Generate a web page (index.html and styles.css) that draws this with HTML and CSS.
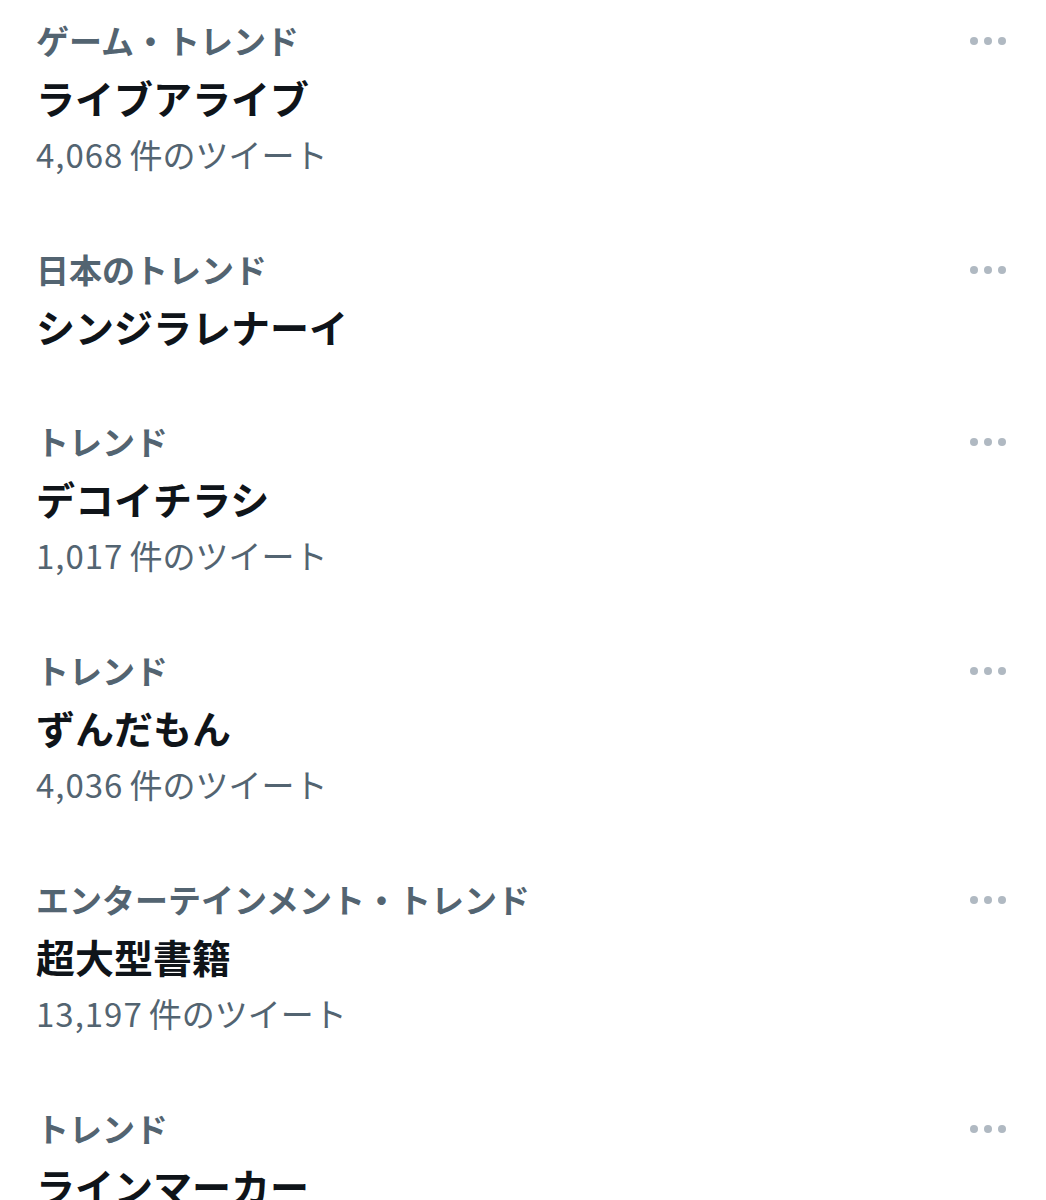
FILE: index.html
```html
<!DOCTYPE html>
<html lang="ja">
<head>
    <meta charset="UTF-8">
    <meta name="viewport" content="width=device-width, initial-scale=1.0">
    <title>トレンド</title>
    <link rel="stylesheet" href="styles.css">
</head>
<body>

    <div class="trend-list">

        <div class="trend">
            <div class="trend-body">
                <div class="trend-category">ゲーム・トレンド</div>
                <div class="trend-name">ライブアライブ</div>
                <div class="trend-count"><span class="num">4,068</span>件のツイート</div>
            </div>
            <div class="more"><span></span><span></span><span></span></div>
        </div>

        <div class="trend">
            <div class="trend-body">
                <div class="trend-category">日本のトレンド</div>
                <div class="trend-name">シンジラレナーイ</div>
            </div>
            <div class="more"><span></span><span></span><span></span></div>
        </div>

        <div class="trend">
            <div class="trend-body">
                <div class="trend-category">トレンド</div>
                <div class="trend-name">デコイチラシ</div>
                <div class="trend-count"><span class="num">1,017</span>件のツイート</div>
            </div>
            <div class="more"><span></span><span></span><span></span></div>
        </div>

        <div class="trend">
            <div class="trend-body">
                <div class="trend-category">トレンド</div>
                <div class="trend-name">ずんだもん</div>
                <div class="trend-count"><span class="num">4,036</span>件のツイート</div>
            </div>
            <div class="more"><span></span><span></span><span></span></div>
        </div>

        <div class="trend">
            <div class="trend-body">
                <div class="trend-category">エンターテインメント・トレンド</div>
                <div class="trend-name">超大型書籍</div>
                <div class="trend-count"><span class="num">13,197</span>件のツイート</div>
            </div>
            <div class="more"><span></span><span></span><span></span></div>
        </div>

        <div class="trend">
            <div class="trend-body">
                <div class="trend-category">トレンド</div>
                <div class="trend-name">ラインマーカー</div>
            </div>
            <div class="more"><span></span><span></span><span></span></div>
        </div>

    </div>

</body>
</html>
```

FILE: styles.css
```css
* {
    margin: 0;
    padding: 0;
    box-sizing: border-box;
}
html, body {
    height: 100%;
    overflow: hidden;
}
body {
    font-family: "Noto Sans CJK JP", "Noto Sans", sans-serif;
    background: #fff;
    color: #0f1419;
}
.trend-list {
    margin-top: -17px;
}
.trend {
    display: flex;
    align-items: flex-start;
    padding: 29px 40px 29px 36px;
}
.trend-body {
    flex: 1;
}
.trend-category {
    font-size: 33px;
    line-height: 57px;
    font-weight: 700;
    color: #536471;
}
.trend-name {
    font-size: 39px;
    line-height: 57px;
    font-weight: 700;
    color: #0f1419;
}
.trend-count {
    font-size: 33px;
    line-height: 57px;
    color: #536471;
}
.trend-count .num {
    margin-right: 6px;
    letter-spacing: 1px;
}
.more {
    display: flex;
    align-items: center;
    gap: 6px;
    height: 57px;
}
.more span {
    width: 8px;
    height: 8px;
    border-radius: 50%;
    background: #b0b9c2;
}
```
